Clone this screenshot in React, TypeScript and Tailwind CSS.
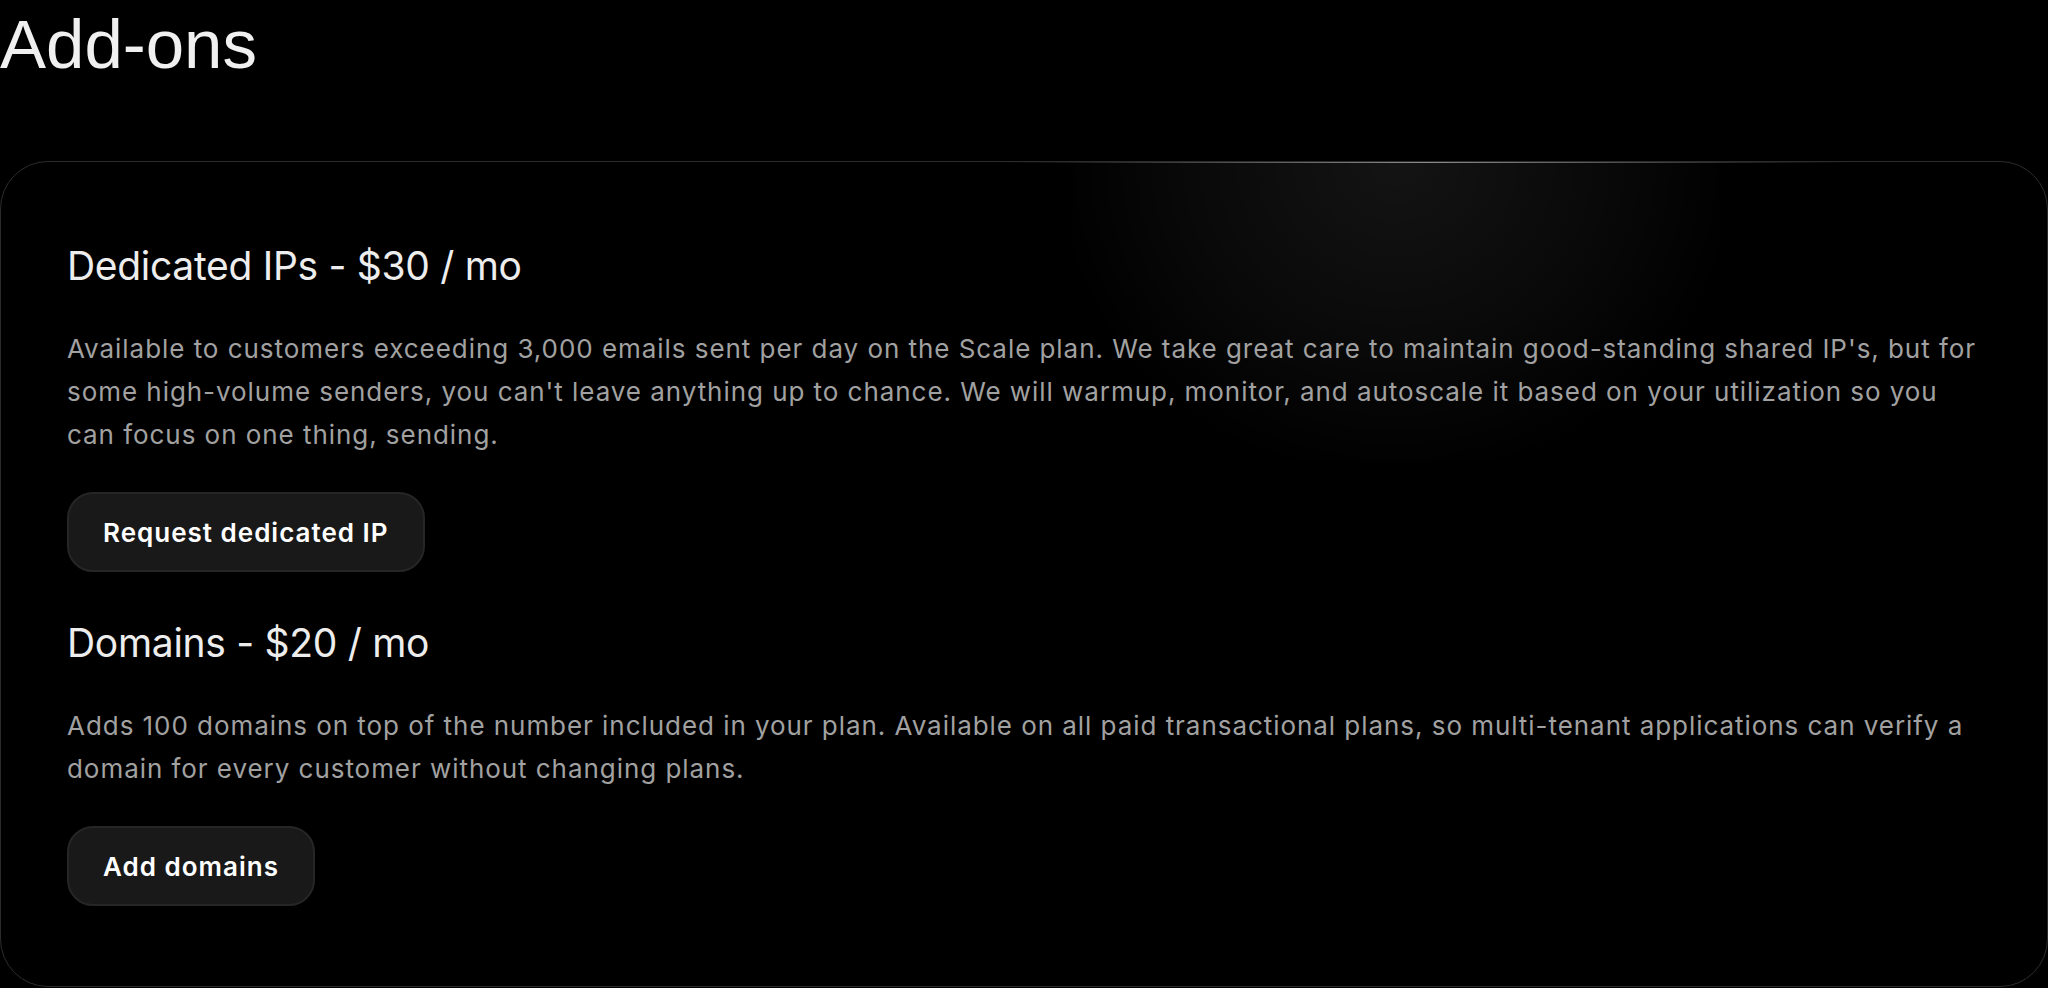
import React from "react";

type Addon = {
  title: string;
  description: string;
  action: string;
};

const addons: Addon[] = [
  {
    title: "Dedicated IPs - $30 / mo",
    description:
      "Available to customers exceeding 3,000 emails sent per day on the Scale plan. We take great care to maintain good-standing shared IP's, but for some high-volume senders, you can't leave anything up to chance. We will warmup, monitor, and autoscale it based on your utilization so you can focus on one thing, sending.",
    action: "Request dedicated IP",
  },
  {
    title: "Domains - $20 / mo",
    description:
      "Adds 100 domains on top of the number included in your plan. Available on all paid transactional plans, so multi-tenant applications can verify a domain for every customer without changing plans.",
    action: "Add domains",
  },
];

function AddonSection({ addon }: { addon: Addon }) {
  return (
    <section className="flex flex-col items-start">
      <h2 className="text-[39px] leading-[47px] font-normal tracking-[-0.3px] text-[#ededed] font-['Inter',sans-serif]">
        {addon.title}
      </h2>
      <p className="mt-[38px] text-[26px] leading-[43px] tracking-[0.95px] text-[#a1a1a1] font-['Inter',sans-serif]">
        {addon.description}
      </p>
      <button className="mt-[36px] h-[80px] px-[34px] rounded-[26px] border-2 border-[#262626] bg-[#191919] text-[26px] font-semibold tracking-[1px] text-white font-['Inter',sans-serif]">
        {addon.action}
      </button>
    </section>
  );
}

export default function App() {
  return (
    <div className="min-h-screen bg-black text-white">
      <h1 className="pt-[11px] text-[69px] leading-[68px] font-normal text-[#f0f0f0] font-['Liberation_Sans',Arial,sans-serif]">
        Add-ons
      </h1>

      <div className="relative mt-[82px] overflow-hidden rounded-[48px] border border-[#2a2d30] bg-black px-[66px] py-[80px]">
        {/* soft spotlight hanging from the top edge */}
        <div className="pointer-events-none absolute left-[1070px] top-0 h-[300px] w-[650px] bg-[radial-gradient(ellipse_at_top,rgba(255,255,255,0.08),rgba(255,255,255,0.035)_45%,transparent_75%)]" />
        <div className="pointer-events-none absolute left-[1000px] top-0 h-px w-[850px] bg-gradient-to-r from-transparent via-[#8a8a8a] to-transparent" />

        <div className="relative flex flex-col gap-[47px]">
          {addons.map((addon) => (
            <AddonSection key={addon.title} addon={addon} />
          ))}
        </div>
      </div>
    </div>
  );
}
